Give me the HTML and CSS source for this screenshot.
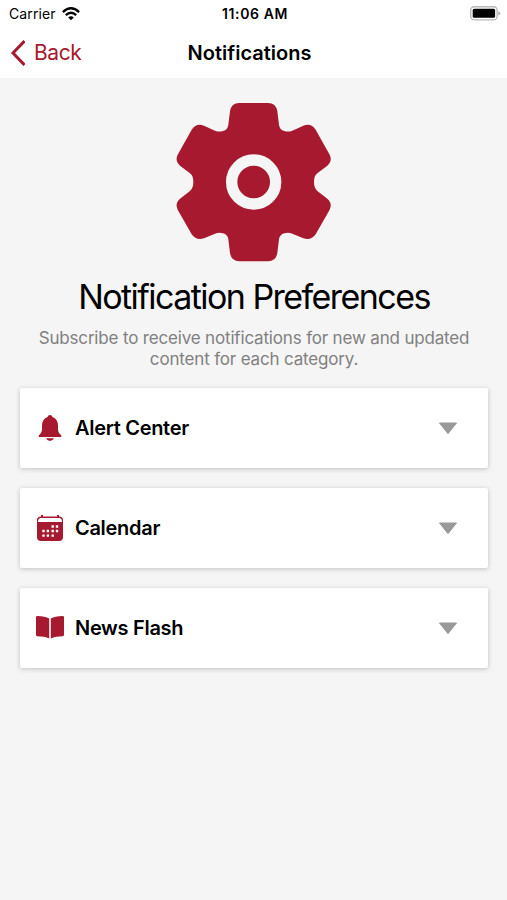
FILE: index.html
```
<!DOCTYPE html>
<html lang="en">
<head>
  <meta charset="UTF-8" />
  <title>Notifications</title>
  <link rel="stylesheet" href="styles.css">
</head>
<body>

<header>
  <div class="status">
    <div class="carrier">
      <span>Carrier</span>
      <svg width="18" height="14" viewBox="0 0 18 14" fill="none" stroke="#000" stroke-width="2.3">
        <path d="M.9 5.1Q9-2.5 17.1 5.1M3.8 8.1Q9 3.3 14.2 8.1"/>
        <path d="M6.2 10.4Q9 7.9 11.8 10.4L9 13.2Z" fill="#000" stroke="none"/>
      </svg>
    </div>
    <span class="time">11:06 AM</span>
    <svg class="battery" width="31" height="15" viewBox="0 0 31 15">
      <rect x=".7" y=".7" width="26.4" height="13.2" rx="3.5" fill="#fff" stroke="#b8b8b8" stroke-width="1.4"/>
      <rect x="2.7" y="2.8" width="22.4" height="9" rx="1.5"/>
      <path d="M28.3 5.2Q30.2 6 30.2 7.4T28.3 9.6Z" fill="#aaa"/>
    </svg>
  </div>
  <nav>
    <a class="back" href="#">
      <svg width="16" height="26" viewBox="0 0 16 26" fill="none" stroke="#a6192e" stroke-width="3"><path d="M15.5 1L4 13L15.5 25"/></svg>
      <span>Back</span>
    </a>
    <h1>Notifications</h1>
  </nav>
</header>

<main>
  <svg class="gear" width="190" height="190" viewBox="0 0 570 570">
    <path fill="#a6192e" d="M238 39H324Q348 39 352 64L357 104Q359 120 373 123Q385 127 397 122L430 107Q453 98 467 119L509 194Q518 213 502 227L472 250Q462 257 462 276Q462 295 472 303L502 326Q518 340 509 359L467 433Q453 453 430 445L397 431Q385 426 373 430Q359 434 357 448L352 489Q348 514 324 514H238Q214 514 210 489L205 448Q203 434 189 430Q177 426 165 431L132 445Q109 453 95 433L53 359Q44 340 60 326L90 303Q100 295 100 276Q100 257 90 250L60 227Q44 213 53 194L95 119Q109 98 132 107L165 122Q177 127 189 123Q203 120 205 104L210 64Q214 39 238 39Z"/>
    <circle cx="281" cy="276" r="66" fill="none" stroke="#f5f5f5" stroke-width="34"/>
  </svg>
  <h2>Notification Preferences</h2>
  <p>Subscribe to receive notifications for new and updated<br>content for each category.</p>

  <div class="card">
    <svg class="icon" width="30" height="30" viewBox="0 0 30 30" fill="#a6192e">
      <path d="M15 2Q17 2 17.5 4Q23 6 23 13V16Q23 20 26.3 22.3V24H3.8V22.3Q7 20 7 16V13Q7 6 12.5 4Q13 2 15 2Z"/>
      <path d="M11 25.3H19Q18 28 15 28T11 25.3Z"/>
    </svg>
    <span>Alert Center</span>
    <svg class="arrow" width="20" height="13" viewBox="0 0 20 13"><path d="M1.5 1H18.5L10 11.7Z"/></svg>
  </div>

  <div class="card">
    <svg class="icon" width="30" height="30" viewBox="0 0 30 30">
      <path fill="#a6192e" d="M6 2H8V3.4H22V2H24V3.4Q28 3.4 28 7V24.3Q28 28 24 28H6Q2 28 2 24.3V7Q2 3.4 6 3.4Z"/>
      <path fill="#fff" d="M6 5H24Q27 5 27 9H3Q3 5 6 5Z"/>
      <path fill="#fff" d="M16.5 12.3h2.4v2.4h-2.4zM20.8 12.3h2.4v2.4h-2.4zM7.3 16.8h2.4v2.4h-2.4zM11.7 16.8h2.4v2.4h-2.4zM16.5 16.8h2.4v2.4h-2.4zM20.8 16.8h2.4v2.4h-2.4zM7.3 21.4h2.4v2.4h-2.4zM11.7 21.4h2.4v2.4h-2.4zM16.5 21.4h2.4v2.4h-2.4z"/>
    </svg>
    <span>Calendar</span>
    <svg class="arrow" width="20" height="13" viewBox="0 0 20 13"><path d="M1.5 1H18.5L10 11.7Z"/></svg>
  </div>

  <div class="card">
    <svg class="icon" width="30" height="30" viewBox="0 0 30 30" fill="#a6192e">
      <path d="M14.2 5.5V25.5Q9.5 23.2 2.2 23.2Q1 23 1 22V4.2Q1 3 2.5 3Q10 3 14.2 5.5Z"/>
      <path d="M15.8 5.5V25.5Q20.5 23.2 27.8 23.2Q29 23 29 22V4.2Q29 3 27.5 3Q20 3 15.8 5.5Z"/>
    </svg>
    <span>News Flash</span>
    <svg class="arrow" width="20" height="13" viewBox="0 0 20 13"><path d="M1.5 1H18.5L10 11.7Z"/></svg>
  </div>
</main>

</body>
</html>
```
FILE: styles.css
```
* { box-sizing: border-box; }
body { font-family: Inter, sans-serif; background: #f5f5f5; color: #000; margin: 0; }
svg { display: block; flex: none; }
header { background: #fff; height: 78px; }
.status { display: grid; grid-template-columns: 1fr auto 1fr; align-items: center; height: 27px; padding: 0 6px 0 9px; font-size: 14px; }
.carrier { display: flex; align-items: center; gap: 6px; }
.time { font-weight: 600; letter-spacing: .6px; }
.carrier span { width: 47px; letter-spacing: .1px; }
.battery { justify-self: end; }
nav { display: grid; grid-template-columns: 1fr auto 1fr; align-items: center; height: 51px; padding: 0 17px 0 9px; }
.back { display: flex; align-items: center; gap: 9px; color: #a6192e; font-size: 21px; letter-spacing: -.4px; text-decoration: none; }
h1 { font-size: 20px; font-weight: 600; margin: 0; }
main { padding: 12px 19px 0 20px; }
.gear { margin: 0 0 0 140px; }
h2 { font-size: 34px; font-weight: 400; letter-spacing: -1.55px; line-height: 40px; margin: -3px 0 0; text-align: center; white-space: nowrap; }
p { color: #808080; font-size: 17px; letter-spacing: -.17px; line-height: 21px; margin: 11px 0 18px; text-align: center; white-space: nowrap; }
.card { display: flex; align-items: center; height: 80px; margin-bottom: 20px; padding: 0 30px 0 15px; background: #fff; border-radius: 2px; box-shadow: 0 1px 5px rgba(0, 0, 0, .22); font-size: 20px; font-weight: 600; letter-spacing: -.3px; }
.card span { flex: 1; margin-left: 10px; }
.arrow { fill: #999; stroke: #999; stroke-linejoin: round; }
```
